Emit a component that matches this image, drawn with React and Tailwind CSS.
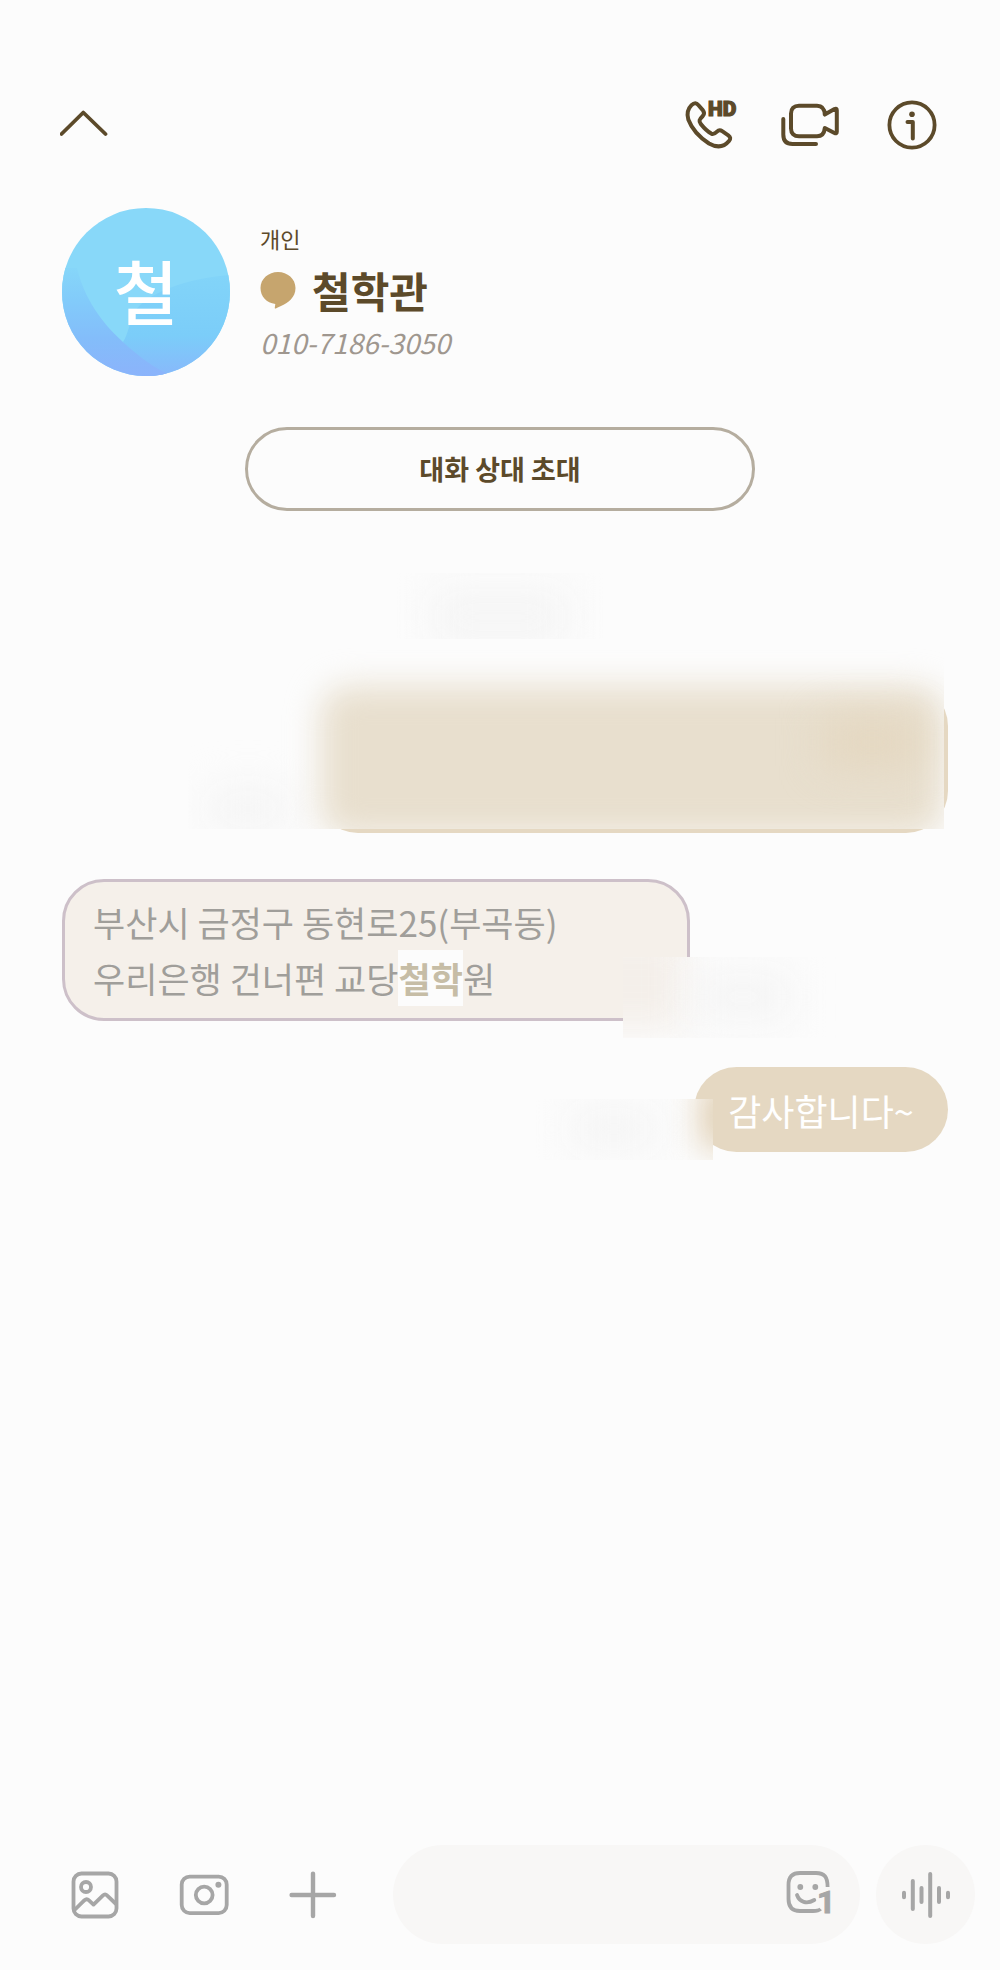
import React, { useState } from "react";

function ChevronUpIcon() {
  return (
    <svg width="48" height="60" viewBox="0 0 48 60" fill="none">
      <path
        d="M1.5 39 L23.3 17.5 L45.5 39"
        stroke="#5c4a2a"
        strokeWidth="3.8"
        strokeLinecap="round"
        strokeLinejoin="round"
      />
    </svg>
  );
}

function HdCallIcon() {
  return (
    <svg width="60" height="60" viewBox="0 0 60 60" fill="none" className="overflow-visible">
      <path
        d="M9.5 10.2 C12.3 7.4 14.5 7.8 16.3 10 L21 15.4 C22.6 17.4 22.4 19.2 20.8 21 C17.2 24.6 16.5 26 18.8 29 C22 33 26 36.8 29.3 38.6 C31.5 39.6 33 38.6 35 36.6 C36.6 35 38.4 34.9 40.2 36.2 L46.3 40.3 C48.6 42 48.8 43.8 47 46 C42 52 35 53 27 48.5 C17 42 9.5 33 6.3 24.5 C4.5 18.5 5.5 14.2 9.5 10.2 Z"
        stroke="#5c4a2a"
        strokeWidth="4"
        strokeLinejoin="round"
      />
      <text
        x="26"
        y="20.5"
        fill="#5c4a2a"
        stroke="#5c4a2a"
        strokeWidth="1.2"
        className="font-['Liberation_Sans_Narrow',Roboto,sans-serif] text-[21px] font-black"
      >
        HD
      </text>
    </svg>
  );
}

function VideoIcon() {
  return (
    <svg
      width="60"
      height="60"
      viewBox="0 0 60 60"
      fill="none"
      stroke="#5c4a2a"
      strokeWidth="4"
      strokeLinecap="round"
      strokeLinejoin="round"
      className="overflow-visible"
    >
      <path d="M42.8 19.6 C42.6 13.5 39.5 10.7 35 10.7 H17 C12 10.7 9 13.5 9 18.5 V33.5 C9 38.5 12 41.3 17 41.3 H35 C39.5 41.3 42.3 38.5 42.8 33 L52.5 38 C54 38.7 54.8 38.2 54.8 36.8 V15.2 C54.8 13.8 54 13.3 52.5 14 Z" />
      <path d="M1.3 24 V39.5 C1.3 45.5 4.5 49 10.5 49 H34" />
    </svg>
  );
}

function InfoIcon() {
  return (
    <svg width="60" height="60" viewBox="0 0 60 60" fill="none" stroke="#5c4a2a">
      <circle cx="30" cy="30" r="22.6" strokeWidth="3.8" />
      <circle cx="30" cy="19.3" r="2.8" fill="#5c4a2a" stroke="none" />
      <path d="M25.5 27 H30.8 V43.5" strokeWidth="4" strokeLinecap="round" strokeLinejoin="round" />
    </svg>
  );
}

function PictureIcon() {
  return (
    <svg
      width="48"
      height="48"
      viewBox="0 0 48 48"
      fill="none"
      stroke="#a6a6a6"
      strokeWidth="3.8"
      strokeLinecap="round"
      strokeLinejoin="round"
    >
      <rect x="2.5" y="2.5" width="43" height="43" rx="8" />
      <circle cx="15" cy="16" r="5" />
      <path d="M3.5 39 L13.5 29.2 C15 27.9 16.4 27.9 17.7 29.2 L22.5 33.6 L32 24.4 C33.4 23 34.7 23 36 24.4 L44.5 32.5" />
    </svg>
  );
}

function CameraIcon() {
  return (
    <svg width="50" height="48" viewBox="0 0 50 48" fill="none" stroke="#a6a6a6" strokeWidth="3.8">
      <rect x="2.7" y="5.6" width="45" height="36.5" rx="8" />
      <circle cx="25.2" cy="24" r="8.4" />
      <circle cx="39.4" cy="13.8" r="3" fill="#a6a6a6" stroke="none" />
    </svg>
  );
}

function PlusIcon() {
  return (
    <svg width="48" height="48" viewBox="0 0 48 48" fill="none" stroke="#a6a6a6" strokeWidth="4.4">
      <path d="M2.6 24 H45 M24 2.6 V45" strokeLinecap="round" />
    </svg>
  );
}

function StickerIcon() {
  return (
    <svg
      width="48"
      height="44"
      viewBox="0 0 48 44"
      fill="none"
      stroke="#a6a6a6"
      strokeWidth="3.8"
      strokeLinecap="round"
      className="overflow-visible"
    >
      <path
        d="M41.6 16 C41.6 6 38.5 2 30 2 H14 C6.5 2 2.5 6 2.5 14 V28 C2.5 36 6.5 40 14 40 H27 C30.5 40 33 39.6 34.6 38"
        strokeLinecap="butt"
      />
      <circle cx="14.3" cy="16" r="2.9" fill="#a6a6a6" stroke="none" />
      <circle cx="29.3" cy="16" r="2.9" fill="#a6a6a6" stroke="none" />
      <path d="M11 24 C13.5 31 20.5 33.5 28.3 29" />
      <text
        x="31"
        y="42"
        fill="#a6a6a6"
        strokeWidth="1"
        className="font-[Roboto,sans-serif] text-[32px] font-bold"
      >
        1
      </text>
    </svg>
  );
}

function VoiceIcon() {
  return (
    <svg
      width="48"
      height="48"
      viewBox="0 0 48 48"
      stroke="#a6a6a6"
      strokeWidth="4"
      strokeLinecap="round"
      className="overflow-visible"
    >
      <path d="M2 21.8 V26.2 M10.8 10 V38 M19.5 17 V31 M28.2 3 V45 M37 17 V31 M46 21.8 V26.2" />
    </svg>
  );
}

function TalkIcon() {
  return (
    <svg width="36" height="38" viewBox="0 0 36 38" fill="#c6a56e" className="shrink-0">
      <path d="M18 1 C27.5 1 35.5 7.8 35.5 17 C35.5 26.5 28 32 21 35 C19 35.8 17.4 36.6 15.8 37.4 C15 37.7 14.6 37.2 14.8 36.4 L15.3 33 C6.5 32 0.5 25.5 0.5 17 C0.5 7.8 8.5 1 18 1 Z" />
    </svg>
  );
}

function Avatar() {
  return (
    <div className="relative flex h-[168px] w-[168px] shrink-0 items-center justify-center overflow-hidden rounded-full">
      <svg viewBox="0 0 168 168" className="absolute inset-0 h-full w-full" aria-hidden="true">
        <defs>
          <linearGradient id="right" gradientUnits="userSpaceOnUse" x1="0" y1="67" x2="0" y2="168">
            <stop offset="0" stopColor="#82d4f9" />
            <stop offset="0.6" stopColor="#7bcdf9" />
            <stop offset="1" stopColor="#88b8fb" />
          </linearGradient>
          <linearGradient id="left" gradientUnits="userSpaceOnUse" x1="0" y1="60" x2="0" y2="168">
            <stop offset="0" stopColor="#86d6f9" />
            <stop offset="0.3" stopColor="#82cbfa" />
            <stop offset="0.65" stopColor="#83bdfa" />
            <stop offset="1" stopColor="#8bb3fb" />
          </linearGradient>
        </defs>
        <rect width="168" height="168" fill="#88d8f9" />
        <path d="M168 67 C125 70 82 86 72 105 C67 116 66 126 61 134 L80 168 H168 Z" fill="url(#right)" />
        <path d="M0 60 H15 C22 90 40 115 61 134 C76 148 92 160 110 168 H0 Z" fill="url(#left)" />
      </svg>
      <span className="relative pb-1 text-[70px] leading-none font-medium text-white">철</span>
    </div>
  );
}

function App() {
  const [message, setMessage] = useState("");

  return (
    <div className="flex min-h-screen flex-col bg-[#fcfcfc] font-['Noto_Sans_CJK_KR',sans-serif] text-[#5c4a2a]">
      <header className="flex items-center justify-between pt-[95px] pr-[58px] pl-[60px]">
        <button type="button" aria-label="접기">
          <ChevronUpIcon />
        </button>
        <div className="flex gap-10">
          <button type="button" aria-label="HD 통화">
            <HdCallIcon />
          </button>
          <button type="button" aria-label="영상 통화">
            <VideoIcon />
          </button>
          <button type="button" aria-label="정보">
            <InfoIcon />
          </button>
        </div>
      </header>

      <section className="mt-[53px] flex gap-[30px] px-[62px]">
        <Avatar />
        <div className="flex flex-col pt-[14px]">
          <p className="text-[22px] leading-8">개인</p>
          <h1 className="mt-2 flex items-center gap-4 text-[42px] leading-[56px] font-bold">
            <TalkIcon />
            철학관
          </h1>
          <p className="mt-2 text-[28px] leading-8 font-normal text-[#9f978f] italic">
            010-7186-3050
          </p>
        </div>
      </section>

      <button
        type="button"
        className="mx-auto mt-[51px] h-[84px] w-[51%] rounded-full border-3 border-[#b5ad9f] text-[27px] font-bold"
      >
        대화 상대 초대
      </button>

      <main className="flex flex-col px-[52px] pt-[62px]">
        {/* hidden date */}
        <div className="mx-auto h-[66px] w-[216px] overflow-hidden pt-4">
          <div className="mx-auto h-14 w-[140px] bg-[#f5f5f5] blur-[20px]" />
        </div>

        {/* hidden outgoing message */}
        <div className="relative mt-[45px] ml-auto h-[149px] w-[632px] rounded-[42px] bg-[#e5d8c2]">
          <div className="absolute right-1 bottom-1 h-[181px] w-[756px] overflow-hidden bg-[#fcfcfc]">
            <div className="absolute bottom-0 left-[20px] h-10 w-20 bg-[#f4f4f4] blur-[20px]" />
            <div className="absolute top-[38px] right-0 -bottom-2 left-[132px] rounded-[30px] bg-[#e8dfce] blur-[16px]" />
            <div className="absolute top-[70px] right-6 h-12 w-24 bg-[#e4d7c0] blur-[20px]" />
          </div>
        </div>

        <div className="relative mt-[46px] ml-[10px] w-[628px] rounded-[42px] border-3 border-[#cdc0c9] bg-[#f5f0ea] px-7 py-3 text-[35px] leading-[56px] font-normal text-[#a09e9a]">
          <p>부산시 금정구 동현로25(부곡동)</p>
          <p>
            우리은행 건너편 교당
            <mark className="inline-block bg-[#fcfcfc] font-bold text-[#c6bda6]">철학</mark>원
          </p>
          {/* hidden time */}
          <div className="absolute -right-[166px] -bottom-5 h-[81px] w-[230px] overflow-hidden bg-[#fcfcfc]">
            <div className="absolute -top-6 -left-12 h-[96px] w-[110px] bg-[#f4efea] blur-[18px]" />
            <div className="absolute top-4 left-[70px] h-12 w-[100px] bg-[#f5f5f5] blur-[20px]" />
          </div>
        </div>

        <div className="relative mt-[46px] ml-auto flex h-[85px] w-[254px] items-center justify-center rounded-full bg-[#e5d8c2] text-[36px] text-white">
          감사합니다~
          {/* hidden time */}
          <div className="absolute right-[235px] -bottom-2 h-[61px] w-[180px] overflow-hidden bg-[#fcfcfc]">
            <div className="absolute top-2 left-[36px] h-11 w-[90px] bg-[#f5f5f5] blur-[20px]" />
            <div className="absolute -top-4 -right-7 h-[66px] w-[40px] bg-[#dfceb2] blur-[16px]" />
          </div>
        </div>
      </main>

      <footer className="mt-auto flex items-center pr-[25px] pb-[26px] pl-[71px]">
        <div className="flex gap-[60px]">
          <button type="button" aria-label="사진">
            <PictureIcon />
          </button>
          <button type="button" aria-label="카메라">
            <CameraIcon />
          </button>
          <button type="button" aria-label="더보기">
            <PlusIcon />
          </button>
        </div>
        <div className="ml-14 flex h-[99px] min-w-0 flex-1 items-center rounded-full bg-[#f8f7f6] pr-[26px] pl-10">
          <input
            type="text"
            aria-label="메시지"
            value={message}
            onChange={(e) => setMessage(e.target.value)}
            className="min-w-0 flex-1 bg-transparent text-[32px] outline-none"
          />
          <button type="button" aria-label="스티커" className="pb-1">
            <StickerIcon />
          </button>
        </div>
        <button
          type="button"
          aria-label="음성 입력"
          className="ml-4 flex h-[99px] w-[99px] shrink-0 items-center justify-center rounded-full bg-[#f8f7f6]"
        >
          <VoiceIcon />
        </button>
      </footer>
    </div>
  );
}

export default App;
